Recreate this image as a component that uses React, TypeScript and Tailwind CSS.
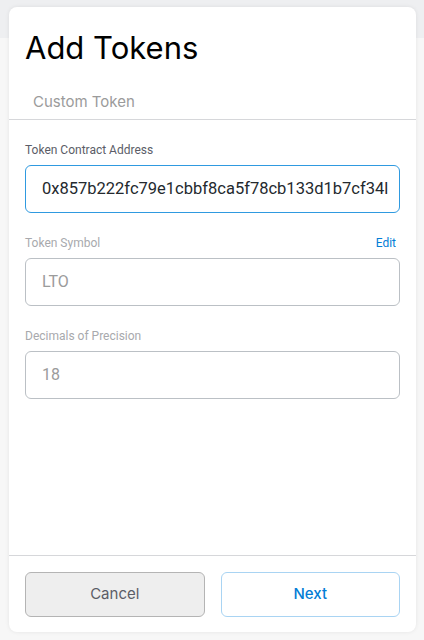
import React from "react";

export default function App() {
  return (
    <div className="relative w-[424px] h-[640px] bg-[#f7f7f7] overflow-hidden" style={{ fontFamily: "Roboto, sans-serif" }}>
      <div className="absolute left-0 top-0 w-full h-[38px] bg-[#eeeff1]" />
      <div className="relative flex h-full pl-[9px] pr-[8px] pt-[7px] pb-[8px]">
        <div className="flex flex-1 flex-col rounded-[8px] bg-white shadow-[0_0_4px_rgba(0,0,0,0.08)]">
          <div className="px-4 pt-[21px]">
            <h1 className="text-[31px] leading-[40px] text-black" style={{ fontFamily: "Inter, sans-serif" }}>Add Tokens</h1>
          </div>
          <div className="mt-[22px] border-b border-[#d6d7da] pl-[24px] pb-[5px]">
            <span className="text-[15px] leading-[24px] text-[#9b9b9b]" style={{ fontFamily: "Inter, sans-serif" }}>Custom Token</span>
          </div>
          <div className="flex flex-1 flex-col px-4 pt-[22px]">
            <label className="text-[12px] leading-[16px] text-[#5b5d67]">Token Contract Address</label>
            <div className="mt-[7px] flex h-[48px] items-center rounded-[6px] border border-[#2f9ae0] pl-[16px]">
              <span className="text-[16.5px] text-[#24292e] whitespace-nowrap overflow-hidden">0x857b222fc79e1cbbf8ca5f78cb133d1b7cf34l</span>
            </div>
            <div className="mt-[22px] flex justify-between pr-[4px]">
              <label className="text-[12px] leading-[16px] text-[#a8a9ad]">Token Symbol</label>
              <span className="text-[12px] leading-[16px] text-[#037dd6]">Edit</span>
            </div>
            <div className="mt-[7px] flex h-[48px] items-center rounded-[6px] border border-[#bbc0c5] pl-[16px]">
              <span className="text-[16px] text-[#9b9b9b]">LTO</span>
            </div>
            <label className="mt-[22px] text-[12px] leading-[16px] text-[#a8a9ad]">Decimals of Precision</label>
            <div className="mt-[7px] flex h-[48px] items-center rounded-[6px] border border-[#bbc0c5] pl-[16px]">
              <span className="text-[16px] text-[#9b9b9b]">18</span>
            </div>
          </div>
          <div className="flex gap-4 border-t border-[#d6d7da] px-4 pt-[16px] pb-[15px]" style={{ fontFamily: "Inter, sans-serif" }}>
            <button className="flex h-[45px] flex-1 items-center justify-center rounded-[6px] border border-[#b4b4b4] bg-[#eeeeee] text-[15px] text-[#5b5d67]">Cancel</button>
            <button className="flex h-[45px] flex-1 items-center justify-center rounded-[6px] border border-[#a9d4f3] bg-white text-[15px] font-medium text-[#037dd6]">Next</button>
          </div>
        </div>
      </div>
    </div>
  );
}
